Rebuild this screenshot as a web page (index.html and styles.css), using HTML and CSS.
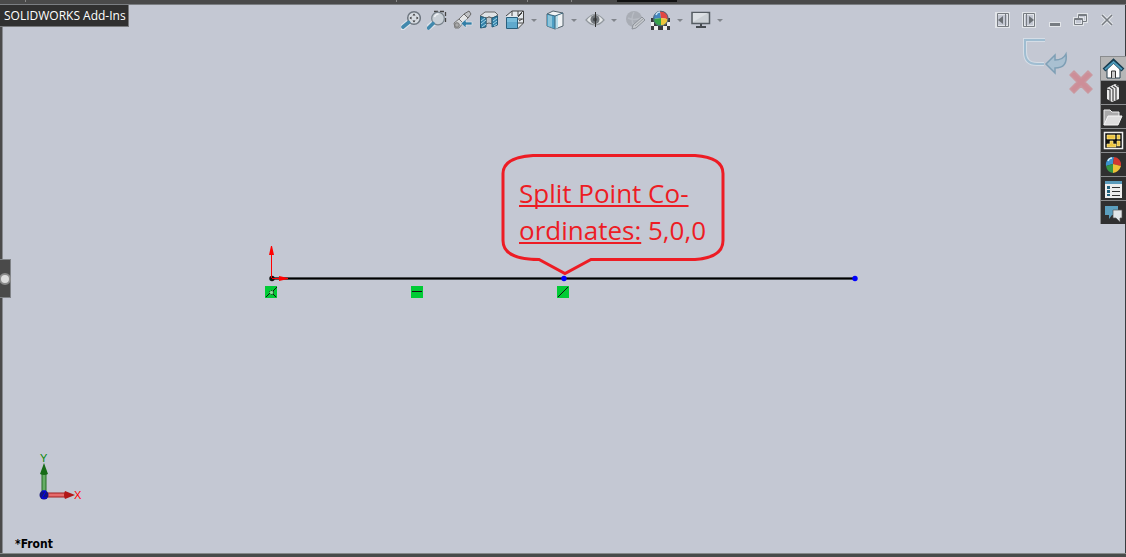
FILE: index.html
```html
<!DOCTYPE html>
<html lang="en">
<head>
<meta charset="utf-8">
<title>SOLIDWORKS Sketch</title>
<link rel="stylesheet" href="styles.css">
</head>
<body>
<div class="app">
  <div class="ribbon-edge"><span class="tick tick-a"></span><span class="tick tick-b"></span><span class="tick tick-c"></span><span class="tick tick-d"></span><span class="slot"></span></div>
  <main class="viewport">
    <header class="bar">
      <div class="tools">
        <button class="tool" aria-label="Zoom to fit"><svg viewBox="0 0 20 20"><path d="M1.500 17.500l6-5" stroke="#dfe4ea" stroke-width="6" stroke-linecap="round"/><circle cx="13" cy="8" r="6.300" fill="#d6dbe1" stroke="#6f7780" stroke-width="1.500"/><path d="M2 17l5.500-4.500" stroke="#4289ad" stroke-width="3.600" stroke-linecap="round"/><path d="M11.500 5.500L13 3.500l1.500 2zM11.500 10.500l1.500 2 1.500-2zM10.500 6.500L8.500 8l2 1.500zM15.500 6.500l2 1.500-2 1.500z" fill="#333"/></svg></button>
        <button class="tool" aria-label="Zoom to area"><svg viewBox="0 0 20 20"><path d="M7 1.500h11.500V14" fill="none" stroke="#444" stroke-width="1.300" stroke-dasharray="4 2"/><path d="M2 17l5.500-4.500" stroke="#dfe4ea" stroke-width="6" stroke-linecap="round"/><circle cx="11" cy="8.500" r="6.300" fill="#c9d0d7" stroke="#7b858d" stroke-width="1.200"/><path d="M7.500 7q1-3 4-3" fill="none" stroke="#eef1f4" stroke-width="1.500"/><path d="M1.500 18L6 13.500" stroke="#4289ad" stroke-width="3.600" stroke-linecap="round"/></svg></button>
        <button class="tool" aria-label="Previous view"><svg viewBox="0 0 20 20"><path d="M1 13l5-4 4 4-4 5H2z" fill="#d4d6d8" stroke="#777"/><path d="M6 9l5-5 4 4-5 5z" fill="#e4e5e6" stroke="#777"/><path d="M11 4l5-3 2 3-3 4z" fill="#bfc1c4" stroke="#666"/><circle cx="4" cy="15" r="2.300" fill="#aaa" stroke="#777"/><path d="M8 13.500l5-4.500v3h6v3h-6v3z" fill="#337fa7" stroke="#dce4ea" stroke-width=".7"/></svg></button>
        <button class="tool" aria-label="Section view"><svg viewBox="0 0 20 20"><path d="M1 6l5-4h10l3 3-5 3-4-1-3 1z" fill="#dfe3e6" stroke="#666"/><path d="M7 8q3-2 6 0v6q-3-2-6 0z" fill="#c1c6ca" stroke="#666"/><path d="M1.500 6.500L7 8v9l-5.500 1zM13 8l5.500-2v9L13 17z" fill="#3484ac" stroke="#245c79"/><path d="M2 11l4-3M2 14l5-4M3 17l4-3M14 11l4-3M14 14l4-3M15 16l3-2" stroke="#a5d4e6"/></svg></button>
        <div class="split"><button class="tool" aria-label="View orientation"><svg viewBox="0 0 20 20"><path d="M1 6l6-5h12v12l-6 6H1z" fill="#e5e9ed"/><path d="M1 6l6-5h11.500v12l-6 6M13 6l5-5M13 1v5M7 1v5M13 9h5M18 13h-5" fill="none" stroke="#444"/><path d="M13 7l4-4M14 11l3-2" stroke="#444"/><path d="M1.500 7.500h11v11h-11z" fill="#5fa9cd" stroke="#295f7d"/><path d="M2 8h10v4H2z" fill="#79bddb"/></svg></button><button class="drop" aria-label="Orientation options"></button></div>
        <div class="split"><button class="tool" aria-label="Display style"><svg viewBox="0 0 20 20"><path d="M2 4l6-3 10 2v13l-8 3-8-3z" fill="#f0f3f5" stroke="#53616b"/><path d="M2 4l8 2v13l-8-3z" fill="#4f9fc4"/><path d="M3 5l4 1v11l-4-1z" fill="#8cc5db"/><path d="M10 6l3-1v13l-3 1z" fill="#b6dbe8"/><path d="M2 4l8 2 8-3M10 6v13" fill="none" stroke="#3a657c"/></svg></button><button class="drop" aria-label="Display style options"></button></div>
        <div class="split"><button class="tool" aria-label="Hide or show items"><svg viewBox="0 0 20 20"><path d="M1 10q9-11 18 0-9 10-18 0z" fill="#e3e6e8" stroke="#92989e" stroke-width="1.200"/><circle cx="10" cy="9.500" r="4.500" fill="#74797e"/><circle cx="10" cy="9.500" r="2" fill="#42474b"/><path d="M10.500 2v15" stroke="#333"/></svg></button><button class="drop" aria-label="Visibility options"></button></div>
        <button class="tool" aria-label="Edit appearance" disabled><svg viewBox="0 0 20 20"><circle cx="9" cy="9" r="8" fill="#a9adb5"/><path d="M3 8q6 3 13 0M9 2q-4 7 0 14" fill="none" stroke="#b7bbc3" stroke-width="1.500"/><path d="M8 15l9-8 3 3-9 8-4 1z" fill="#c6c9ce" stroke="#8d9299"/><path d="M10 16l8-7" stroke="#9ba0a5"/></svg></button>
        <div class="split"><button class="tool" aria-label="Apply scene"><svg viewBox="0 0 20 20"><path d="M0 8h19v12H0z" fill="#eee"/><path d="M0 8h4v4H0zM15 8h4v4h-4zM3 12h4v4H3zM12 12h4v4h-4zM0 16h3v4H0zM7 16h5v4H7zM16 16h3v4h-3z" fill="#393b3d"/><path d="M10 8L2.500 9A7.500 7.500 0 0 1 9 1z" fill="#4386bd"/><path d="M10 8L9 1a7 7 0 0 1 8 8z" fill="#e24642"/><path d="M10 8l7 1a7 7 0 0 1-7 7z" fill="#edc73d"/><path d="M10 8v8a7 7 0 0 1-7.500-7z" fill="#37a349"/><circle cx="9.800" cy="8.500" r="7.300" fill="none" stroke="#4a657a"/><path d="M5 5q1-3 4-3" fill="none" stroke="#c5e1f4" stroke-width="1.500"/></svg></button><button class="drop" aria-label="Scene options"></button></div>
        <div class="split"><button class="tool" aria-label="View settings"><svg viewBox="0 0 20 20"><path d="M1 2.500h17.500v11H1z" fill="#cbd0d5" stroke="#555c63" stroke-width="1.500"/><path d="M2 3h15L2 12z" fill="#dce0e4"/><path d="M9 14h2v2h4v2H5v-2h4z" fill="#454a4f"/></svg></button><button class="drop" aria-label="View settings options"></button></div>
      </div>
      <div class="window-controls">
        <button class="tool" aria-label="Previous document"><svg viewBox="0 0 20 20"><path d="M3.500 3.500h12v13h-12z" fill="none" stroke="#e2e5e9" stroke-width="3"/><path d="M4.500 3.500h11v13h-11zM12.500 3v14" fill="none" stroke="#777c82"/><path d="M10 6v8l-5-4z" fill="#6b7075"/></svg></button>
        <button class="tool" aria-label="Next document"><svg viewBox="0 0 20 20"><path d="M4.500 3.500h11v13h-11z" fill="none" stroke="#e2e5e9" stroke-width="3"/><path d="M4.500 3.500h11v13h-11zM7.500 3v14" fill="none" stroke="#777c82"/><path d="M10 6v8l5-4z" fill="#6b7075"/></svg></button>
        <button class="tool" aria-label="Minimize"><svg viewBox="0 0 20 20"><path d="M4 12h12v5H4z" fill="#e2e5e9"/><path d="M5 13h10v3H5z" fill="#777c82"/></svg></button>
        <button class="tool" aria-label="Restore"><svg viewBox="0 0 20 20"><g fill="none" stroke="#e2e5e9" stroke-width="3"><path d="M7.500 8V4.500h8v7H12M3.500 8.500h8v6h-8z"/></g><g fill="none" stroke="#777c82"><path d="M7.500 8V4.500h8v7H12M7 5.500h9M3.500 8.500h8v6h-8zM3 9.500h9"/></g></svg></button>
        <button class="tool" aria-label="Close"><svg viewBox="0 0 20 20"><path d="M5 5l10 10M15 5L5 15" stroke="#e2e5e9" stroke-width="3.500"/><path d="M5 5l10 10M15 5L5 15" stroke="#777c82" stroke-width="1.500"/></svg></button>
      </div>
    </header>
    <div class="workspace">
      <div class="confirm">
        <button class="exit" aria-label="Exit sketch"><svg viewBox="0 0 46 38"><path d="M23 3H3v12q0 12 12 12h7" fill="none" stroke="#d5dde6" stroke-width="4"/><path d="M23 3H3v12q0 12 12 12h7" fill="none" stroke="#9fbdd1" stroke-width="2"/><path d="M24 27l9-9v5q8 0 11-6 2 14-11 14v5z" fill="#a9c0d1" stroke="#7e9fb5" stroke-width="1.500"/></svg></button>
        <button class="cancel" aria-label="Cancel sketch"><svg viewBox="0 0 26 26"><path d="M2 6l4-4 7 7 7-7 4 4-7 7 7 7-4 4-7-7-7 7-4-4 7-7z" fill="#cd8e98" stroke="#ca989f" stroke-width="1.500" stroke-linejoin="round"/></svg></button>
      </div>
      <nav class="taskpane" aria-label="Task pane">
        <button class="pane-tab selected" aria-label="Resources"><svg viewBox="0 0 24 22"><path d="M6 10v10h13V10l-6-6z" fill="#fff" stroke="#263f4c"/><path d="M3 12l9.500-9 9.500 9" fill="none" stroke="#173c50" stroke-width="4"/><path d="M4 11.500L12.500 4l8.500 7.500" fill="none" stroke="#4e9bbb" stroke-width="2"/><path d="M10.500 20v-7h4v7" fill="#ccc" stroke="#333"/></svg></button>
        <button class="pane-tab" aria-label="Design library"><svg viewBox="0 0 24 22"><path d="M6 6l8-4 4 2v13l-7 3-5-3z" fill="#eee"/><path d="M6 7l3 1v11M9 5l3 2v12M12 4l3 2v12M15 3l3 2" fill="none" stroke="#444" stroke-width="1.200"/></svg></button>
        <button class="pane-tab" aria-label="File explorer"><svg viewBox="0 0 24 22"><path d="M3 19V4h6l2 2h7v5" fill="#aaa" stroke="#eee"/><path d="M3 19l4-9h14l-4 9z" fill="#ddd" stroke="#f5f5f5"/></svg></button>
        <button class="pane-tab" aria-label="View palette"><svg viewBox="0 0 24 22"><path d="M3.500 2.500h18v16h-18z" fill="#111" stroke="#eee" stroke-width="1.500"/><path d="M6 5h8v4H6zM16 5h3v4h-3zM9 11h3v3h3v3H6v-3h3zM16 11h3v5h-3z" fill="#edc540" stroke="#fff0a2" stroke-width=".6"/></svg></button>
        <button class="pane-tab" aria-label="Appearances"><svg viewBox="0 0 24 22"><path d="M12 10l-7 2a7.500 7.500 0 0 1 8-9z" fill="#3c94d0"/><path d="M12 10l1-7a7.500 7.500 0 0 1 7 9z" fill="#d33730"/><path d="M12 10l8 2q-2 6-8 7z" fill="#eec238"/><path d="M12 10v9q-6-1-7-7z" fill="#359645"/><path d="M7 7q1-3 4-3" fill="none" stroke="#d2eefc" stroke-width="1.500"/></svg></button>
        <button class="pane-tab" aria-label="Custom properties"><svg viewBox="0 0 24 22"><path d="M4 3h17v17H4z" fill="#eee"/><path d="M4 3h17v3H4z" fill="#5b9bbb"/><path d="M6 8h3v3H6zM6 12h3v3H6zM6 16h3v2H6z" fill="#21627e"/><path d="M11 9.500h8M11 13.500h8M11 17.500h8" stroke="#333"/></svg></button>
        <button class="pane-tab" aria-label="Forum"><svg viewBox="0 0 24 22"><path d="M4 4h13v9h-6l-3 4v-4H4z" fill="#5b9fbe"/><path d="M12 8h9v8h-2v4l-4-4h-3z" fill="#e2e6e8" stroke="#555" stroke-width=".7"/></svg></button>
      </nav>
    </div>
  </main>
  <div class="status-edge"></div>

  <svg class="sketch" aria-label="Sketch line">
    <path d="M272 278.500h583" stroke="#62676c" stroke-width="3"/>
    <path d="M272 278.500h583" stroke="#000" stroke-width="1.500"/>
    <circle cx="272" cy="278.500" r="2.700" fill="#111"/>
    <path d="M271.500 278V253M272 278.500h9" stroke="#f00"/>
    <path d="M269 255l2-9h1l2 9zM279 276l9 2v1l-9 2z" fill="#f00"/>
    <circle cx="564" cy="278.500" r="2.700" fill="#00f"/><circle cx="855" cy="278.500" r="2.700" fill="#00f"/>
    <g fill="#00cb35"><path d="M265 286h12v12h-12zM411 286h12v12h-12zM557 286h12v12h-12z"/></g>
    <path d="M412 291.500h10M558 297l10-10M266 297l4-4M273 291l4-4M273 294l3 3" stroke="#111"/>
    <circle cx="271.500" cy="292.500" r="2" fill="#8edb9c" stroke="#111" stroke-dasharray="1 1"/>
    <path d="M533 155.500h162q28 2 28 18v67q0 17-28 19H591l-26 14-26-14q-36 0-36-19v-67q0-16 30-18z" fill="none" stroke="#ed1c24" stroke-width="3"/>
  </svg>
  <p class="callout"><u>Split Point Co-<br>ordinates:</u> 5,0,0</p>
  <div class="addins">SOLIDWORKS Add-Ins</div>
  <button class="expander" aria-label="Expand panel"></button>
  <div class="view-info">
    <svg class="triad" viewBox="0 0 80 56">
      <path d="M27 42V19h4v23z" fill="#65ad65" stroke="#246d24"/><path d="M25 21l4-11 4 11q-4 2-8 0z" fill="#176b17"/>
      <path d="M31 40h20v4H31z" fill="#e66b6b" stroke="#9f2020"/><path d="M50 38l10 4-10 4q-2-4 0-8z" fill="#b11717"/>
      <circle cx="29" cy="42" r="4.500" fill="#13137e"/><path d="M27 38h4l-4 7h5" stroke="#00f" fill="none"/>
      <text x="25" y="9" fill="#0a8a0a">Y</text><text x="59" y="46" fill="#f00">X</text>
    </svg>
    <span class="view-name">*Front</span>
  </div>
</div>
</body>
</html>
```
FILE: styles.css
```css
* { box-sizing: border-box; }
body { margin: 0; font-family: "Open Sans", "Noto Sans", sans-serif; }
button { padding: 0; border: 0; background: none; color: inherit; }
button svg { display: block; width: 100%; height: 100%; }
.app { position: relative; display: flex; flex-direction: column; min-height: 100vh; background: #c4c8d3; }
.ribbon-edge { position: relative; height: 5px; background: #4a4a4a; border-bottom: 1px solid #7b7e82; }
.tick { position: absolute; top: 0; width: 1px; height: 2px; background: #888; }
.tick-a { left: 25px; }
.tick-b { left: 396px; }
.tick-c { left: 527px; }
.tick-d { left: 571px; }
.slot { position: absolute; left: 617px; top: 0; width: 60px; height: 2px; background: #111; }
.viewport { flex: 1; border-left: 2px solid #4a4a4a; border-right: 1px solid #3a3d40; box-shadow: inset 1px 0 #888b90; }
.bar { display: grid; grid-template-columns: 1fr auto 1fr; align-items: center; height: 30px; padding-right: 8px; padding-left: 7px; }
.tools { grid-column: 2; display: flex; gap: 6px; }
.split { display: flex; gap: 4px; align-items: center; }
.tool { width: 20px; height: 20px; flex: none; }
.drop { display: flex; justify-content: center; width: 10px; height: 20px; align-items: center; }
.drop::after { content: ""; border: 3px solid transparent; border-top-color: #81858c; border-bottom: 0; }
.window-controls { display: flex; gap: 6px; justify-content: flex-end; }
.workspace { display: flex; justify-content: flex-end; }
.confirm { display: flex; margin-right: 6px; }
.exit { width: 46px; height: 38px; margin-top: 2px; }
.cancel { width: 26px; height: 26px; margin-top: 34px; }
.taskpane { display: flex; flex-direction: column; width: 26px; margin-top: 21px; margin-right: -1px; padding: 1px 0 0 1px; gap: 1px; background: #8a8c8e; }
.pane-tab { width: 25px; height: 23px; background: #303030; }
.pane-tab svg { width: 24px; height: 22px; }
.selected { background: #b6b6b6; }
.status-edge { height: 4px; background: #484b4a; border-top: 1px solid #858989; }
.sketch { position: absolute; top: 0; left: 0; width: 100%; height: 100%; pointer-events: none; }
.callout { position: absolute; top: 175px; left: 519px; margin: 0; color: #ed1c24; font-size: 26px; line-height: 37px; white-space: nowrap; }
.callout u { text-decoration-thickness: 2px; text-underline-offset: 2px; text-decoration-skip-ink: none; }
.addins { position: absolute; top: 5px; left: 0; padding: 0 2px 0 4px; border-right: 1px solid #77797c; border-bottom: 1px solid #77797c; background: #303030; color: #fff; font-size: 12px; line-height: 21px; }
.expander { position: absolute; top: 259px; left: 0; display: flex; align-items: center; justify-content: center; width: 11px; height: 39px; border: 1px solid #808387; border-left: 0; background: #4a4a4a; }
.expander::after { content: ""; flex: none; width: 8px; height: 8px; border: 2px solid #8b8b8b; border-radius: 50%; background: #ddd; }
.view-info { position: absolute; bottom: 6px; left: 15px; display: flex; flex-direction: column; gap: 28px; }
.triad { display: block; width: 80px; height: 56px; font-family: "Liberation Sans", sans-serif; font-size: 11px; }
.view-name { font-family: "DejaVu Sans Condensed", "DejaVu Sans", sans-serif; font-size: 12px; font-weight: 700; line-height: 14px; }
```
